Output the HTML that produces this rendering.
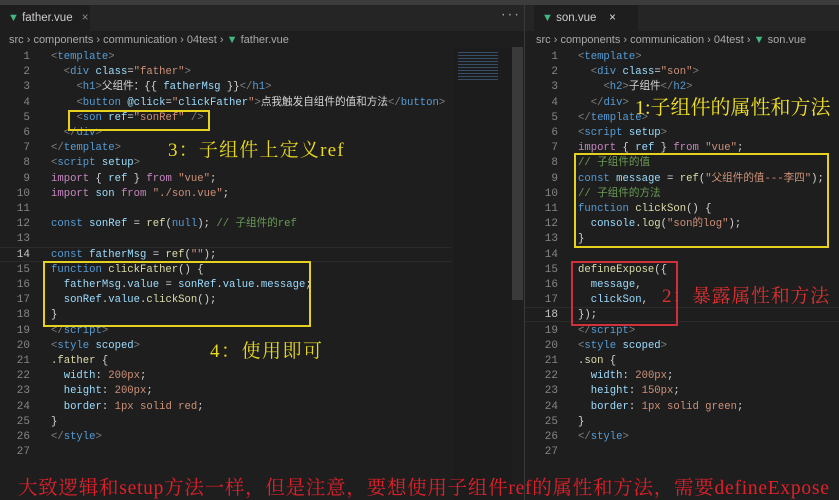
<!DOCTYPE html>
<html><head><meta charset="utf-8"><style>
*{margin:0;padding:0;box-sizing:border-box}
body{width:839px;height:500px;background:#1e1e1e;position:relative;overflow:hidden;font-family:"Liberation Mono","Noto Sans CJK SC",monospace;font-size:10.6px;}
.abs{position:absolute}
.topbar{left:0;top:0;width:839px;height:5px;background:#3c3c3c}
.tabs{top:5px;height:26px;background:#252526}
.tab{top:5px;height:26px;background:#1e1e1e;color:#ccc;font-family:"Liberation Sans",sans-serif;font-size:11.5px;line-height:26px;padding-left:8px}
.v{color:#41b883;font-weight:bold;font-size:11px}
.bc{color:#a9a9a9;font-family:"Liberation Sans",sans-serif;font-size:11px;top:34px;white-space:pre}
.ln{color:#858585;width:26px;text-align:right;white-space:pre;line-height:15.2px;font-size:11px}
.code{white-space:pre;line-height:15.2px;color:#d4d4d4}
.g{color:#808080}.t{color:#569cd6}.a{color:#9cdcfe}.s{color:#ce9178}.k{color:#c586c0}.f{color:#dcdcaa}.c{color:#6a9955}.w{color:#d4d4d4}
.ann{font-family:"Liberation Serif","Noto Serif CJK SC",serif;white-space:pre}
</style></head><body>
<div class="abs topbar"></div>
<div class="abs tabs" style="left:0;width:524px"></div>
<div class="abs tabs" style="left:525px;width:314px"></div>
<div class="abs tab" style="left:0;width:90px"><span class="v">▼</span> father.vue <span style="color:#888;margin-left:6px">×</span></div>
<div class="abs" style="left:500px;top:10px;color:#aaa;font-size:11px">···</div>
<div class="abs tab" style="left:534px;width:104px"><span class="v">▼</span> son.vue &nbsp;&nbsp;&nbsp;<span style="color:#ddd">×</span></div>
<div class="abs" style="left:524px;top:5px;width:1px;height:495px;background:#3a3a3a"></div>
<div class="abs bc" style="left:9px">src › components › communication › 04test › <span class="v">▼</span> father.vue</div>
<div class="abs bc" style="left:536px">src › components › communication › 04test › <span class="v">▼</span> son.vue</div>
<div class="abs" style="left:453px;top:47px;width:59px;height:453px;background:#1c1c1c"></div>
<div class="abs" style="left:458px;top:52px;width:40px;height:30px;background:repeating-linear-gradient(#3d5a7a 0 1px,transparent 1px 3px);opacity:.8"></div>
<div class="abs" style="left:512px;top:47px;width:11px;height:253px;background:#3a3a3a"></div>
<div class="abs" style="left:0;top:247px;width:452px;height:15px;border-top:1px solid #2a2a2a;border-bottom:1px solid #2a2a2a"></div>
<div class="abs" style="left:525px;top:307px;width:314px;height:15px;border-top:1px solid #2a2a2a;border-bottom:1px solid #2a2a2a"></div>

<div class="abs ln" style="left:4px;top:50px">1
2
3
4
5
6
7
8
9
10
11
12
13
<span style="color:#c6c6c6">14</span>
15
16
17
18
19
20
21
22
23
24
25
26
27</div>
<div class="abs code" style="left:51px;top:50px"><span class="g">&lt;</span><span class="t">template</span><span class="g">&gt;</span>
  <span class="g">&lt;</span><span class="t">div</span> <span class="a">class</span>=<span class="s">"father"</span><span class="g">&gt;</span>
    <span class="g">&lt;</span><span class="t">h1</span><span class="g">&gt;</span>父组件：{{ <span class="a">fatherMsg</span> }}<span class="g">&lt;/</span><span class="t">h1</span><span class="g">&gt;</span>
    <span class="g">&lt;</span><span class="t">button</span> <span class="a">@click</span>=<span class="s">"</span><span class="a">clickFather</span><span class="s">"</span><span class="g">&gt;</span>点我触发自组件的值和方法<span class="g">&lt;/</span><span class="t">button</span><span class="g">&gt;</span>
    <span class="g">&lt;</span><span class="t">son</span> <span class="a">ref</span>=<span class="s">"sonRef"</span> <span class="g">/&gt;</span>
  <span class="g">&lt;/</span><span class="t">div</span><span class="g">&gt;</span>
<span class="g">&lt;/</span><span class="t">template</span><span class="g">&gt;</span>
<span class="g">&lt;</span><span class="t">script</span> <span class="a">setup</span><span class="g">&gt;</span>
<span class="k">import</span> { <span class="a">ref</span> } <span class="k">from</span> <span class="s">"vue"</span>;
<span class="k">import</span> <span class="a">son</span> <span class="k">from</span> <span class="s">"./son.vue"</span>;

<span class="t">const</span> <span class="a">sonRef</span> = <span class="f">ref</span>(<span class="t">null</span>); <span class="c">// 子组件的ref</span>

<span class="t">const</span> <span class="a">fatherMsg</span> = <span class="f">ref</span>(<span class="s">""</span>);
<span class="t">function</span> <span class="f">clickFather</span>() {
  <span class="a">fatherMsg</span>.<span class="a">value</span> = <span class="a">sonRef</span>.<span class="a">value</span>.<span class="a">message</span>;
  <span class="a">sonRef</span>.<span class="a">value</span>.<span class="f">clickSon</span>();
}
<span class="g">&lt;/</span><span class="t">script</span><span class="g">&gt;</span>
<span class="g">&lt;</span><span class="t">style</span> <span class="a">scoped</span><span class="g">&gt;</span>
<span class="f">.father</span> {
  <span class="a">width</span>: <span class="s">200px</span>;
  <span class="a">height</span>: <span class="s">200px</span>;
  <span class="a">border</span>: <span class="s">1px solid red</span>;
}
<span class="g">&lt;/</span><span class="t">style</span><span class="g">&gt;</span></div>

<div class="abs ln" style="left:532px;top:50px">1
2
3
4
5
6
7
8
9
10
11
12
13
14
15
16
17
<span style="color:#c6c6c6">18</span>
19
20
21
22
23
24
25
26
27</div>
<div class="abs code" style="left:578px;top:50px"><span class="g">&lt;</span><span class="t">template</span><span class="g">&gt;</span>
  <span class="g">&lt;</span><span class="t">div</span> <span class="a">class</span>=<span class="s">"son"</span><span class="g">&gt;</span>
    <span class="g">&lt;</span><span class="t">h2</span><span class="g">&gt;</span>子组件<span class="g">&lt;/</span><span class="t">h2</span><span class="g">&gt;</span>
  <span class="g">&lt;/</span><span class="t">div</span><span class="g">&gt;</span>
<span class="g">&lt;/</span><span class="t">template</span><span class="g">&gt;</span>
<span class="g">&lt;</span><span class="t">script</span> <span class="a">setup</span><span class="g">&gt;</span>
<span class="k">import</span> { <span class="a">ref</span> } <span class="k">from</span> <span class="s">"vue"</span>;
<span class="c">// 子组件的值</span>
<span class="t">const</span> <span class="a">message</span> = <span class="f">ref</span>(<span class="s">"父组件的值---李四"</span>);
<span class="c">// 子组件的方法</span>
<span class="t">function</span> <span class="f">clickSon</span>() {
  <span class="a">console</span>.<span class="f">log</span>(<span class="s">"son的log"</span>);
}

<span class="f">defineExpose</span>({
  <span class="a">message</span>,
  <span class="a">clickSon</span>,
});
<span class="g">&lt;/</span><span class="t">script</span><span class="g">&gt;</span>
<span class="g">&lt;</span><span class="t">style</span> <span class="a">scoped</span><span class="g">&gt;</span>
<span class="f">.son</span> {
  <span class="a">width</span>: <span class="s">200px</span>;
  <span class="a">height</span>: <span class="s">150px</span>;
  <span class="a">border</span>: <span class="s">1px solid green</span>;
}
<span class="g">&lt;/</span><span class="t">style</span><span class="g">&gt;</span></div>

<div class="abs" style="left:68px;top:110px;width:142px;height:21px;border:2px solid #e6d21e"></div>
<div class="abs" style="left:43px;top:261px;width:268px;height:66px;border:2px solid #e6d21e"></div>
<div class="abs" style="left:574px;top:153px;width:255px;height:95px;border:2px solid #e6d21e"></div>
<div class="abs" style="left:571px;top:261px;width:107px;height:65px;border:2px solid #d0303a"></div>

<div class="abs ann" style="left:168px;top:135px;color:#e8d820;font-size:19px;letter-spacing:1.2px">3：子组件上定义ref</div>
<div class="abs ann" style="left:210px;top:336px;color:#e8d820;font-size:19px;letter-spacing:1.5px">4：使用即可</div>
<div class="abs ann" style="left:635px;top:91px;color:#f0e028;font-size:20px">1:子组件的属性和方法</div>
<div class="abs ann" style="left:662px;top:281px;color:#e03030;font-size:19px;letter-spacing:0.7px">2：暴露属性和方法</div>
<div class="abs ann" style="left:18px;top:472px;color:#e0202a;font-size:19.5px;letter-spacing:0.75px">大致逻辑和setup方法一样，但是注意，要想使用子组件ref的属性和方法，需要defineExpose</div>
</body></html>
